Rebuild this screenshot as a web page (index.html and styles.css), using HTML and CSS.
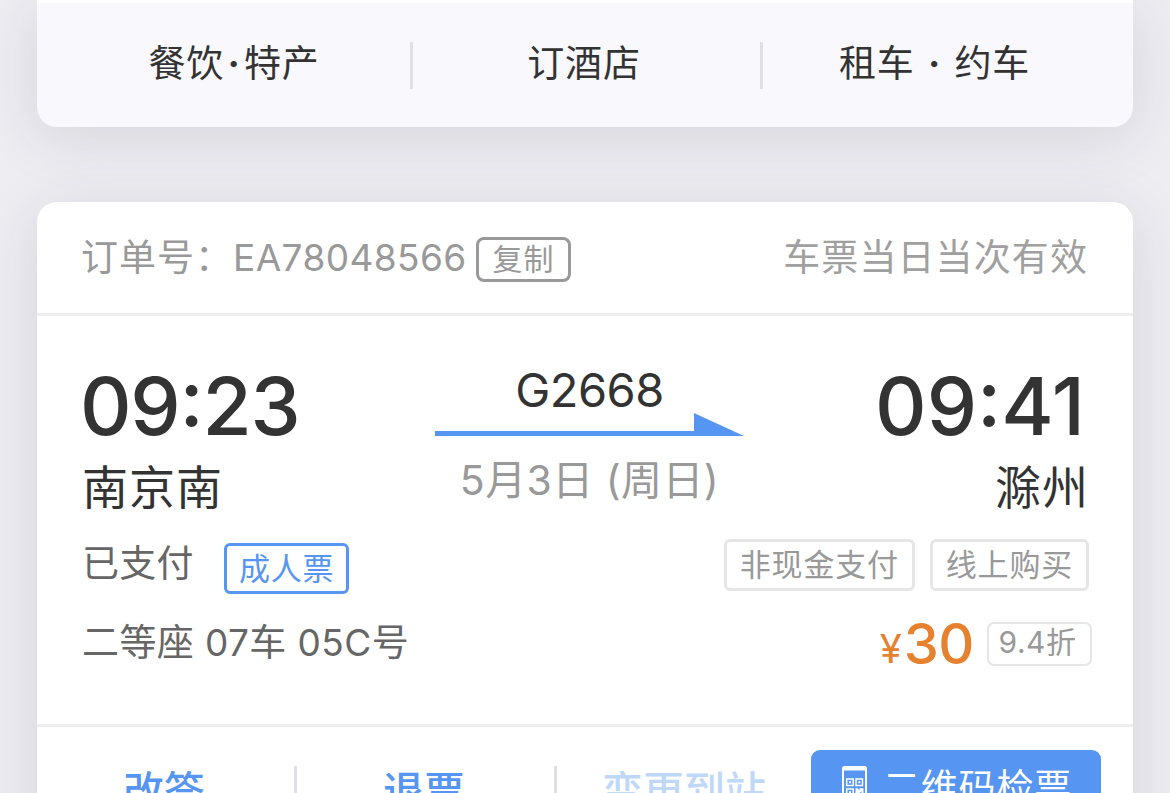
FILE: index.html
```html
<!DOCTYPE html>
<html lang="zh-CN">
<head>
  <meta charset="utf-8">
  <title>车票订单</title>
  <link rel="stylesheet" href="styles.css">
</head>
<body>
  <div class="card services">
    <div class="service">餐饮<span class="dot">·</span>特产</div>
    <div class="divider"></div>
    <div class="service">订酒店</div>
    <div class="divider"></div>
    <div class="service">租车<span class="dot wide">·</span>约车</div>
  </div>

  <div class="card ticket">
    <div class="ticket-header">
      <div class="order">
        <span>订单号：</span>
        <span class="order-no">EA78048566</span>
        <button type="button" class="copy-btn">复制</button>
      </div>
      <span class="notice">车票当日当次有效</span>
    </div>

    <div class="ticket-body">
      <div class="route">
        <div class="stop">
          <div class="time">09:23</div>
          <div class="station">南京南</div>
        </div>
        <div class="train">
          <div class="train-no">G2668</div>
          <svg class="arrow" width="309" height="23" viewBox="0 0 309 23">
            <path d="M0 18h259V0l50 23H0z" fill="#5696f2"/>
          </svg>
          <div class="date">5月3日 <span class="weekday">(周日)</span></div>
        </div>
        <div class="stop stop-end">
          <div class="time">09:41</div>
          <div class="station">滁州</div>
        </div>
      </div>

      <div class="info">
        <div class="status">已支付<span class="tag tag-blue">成人票</span></div>
        <div class="tags">
          <span class="tag">非现金支付</span>
          <span class="tag">线上购买</span>
        </div>
      </div>

      <div class="info seat-row">
        <div class="seat">二等座 07车 05C号</div>
        <div class="price">
          <span class="yen">¥</span><span class="amount">30</span>
          <span class="discount">9.4折</span>
        </div>
      </div>
    </div>

    <div class="ticket-footer">
      <div class="action">改签</div>
      <div class="divider"></div>
      <div class="action">退票</div>
      <div class="divider"></div>
      <div class="action disabled">变更到站</div>
      <button type="button" class="qr-btn">
        <svg class="qr-icon" width="25" height="46" viewBox="0 0 25 46">
          <rect width="25" height="46" rx="2.5" fill="#fff"/>
          <rect x="2" y="4.5" width="21" height="35" fill="#5696f2"/>
          <g fill="none" stroke="#fff" stroke-width="1.5">
            <rect x="4.7" y="13" width="6.5" height="6.5"/>
            <rect x="14" y="13" width="6.5" height="6.5"/>
            <rect x="4.7" y="23" width="6.5" height="6.5"/>
          </g>
          <path d="M7 15.3h2v2H7zM16.3 15.3h2v2h-2zM7 25.3h2v2H7zM13.5 22.2h2l2 2v-2h4v8h-2v-5l-3 3h-3z" fill="#fff"/>
        </svg>
        <span>二维码检票</span>
      </button>
    </div>
  </div>
</body>
</html>
```

FILE: styles.css
```css
* {
  box-sizing: border-box;
}

body {
  margin: 0;
  height: 793px;
  overflow: hidden;
  background: #eeedf2;
  font-family: Inter, "Noto Sans CJK SC", sans-serif;
  font-weight: 400;
  color: #333;
}

button {
  font-family: inherit;
  margin: 0;
}

.card {
  margin: 0 37px;
  background: #fff;
  box-shadow: 0 10px 60px rgba(50, 50, 60, 0.13);
}

.services {
  display: flex;
  align-items: center;
  height: 127px;
  border-top: 3px solid #fff;
  border-radius: 0 0 20px 20px;
  background: #f8f8fd;
  font-size: 37px;
  line-height: 50px;
  letter-spacing: 0.8px;
}

.service {
  flex: 1;
  display: flex;
  justify-content: center;
  padding: 0 5px 3px 0;
}

.service:first-child {
  flex: 0 0 373px;
  padding-left: 26px;
}

.service:last-child {
  flex: 0 0 370px;
  padding-right: 27px;
}

.dot {
  width: 20px;
  font-weight: 700;
  text-align: center;
}

.dot.wide {
  width: 40px;
}

.divider {
  flex: none;
  width: 3px;
  height: 47px;
  background: #e0e0e4;
}

.ticket {
  margin-top: 75px;
  height: 700px;
  border-radius: 20px;
}

.ticket-header {
  display: flex;
  justify-content: space-between;
  height: 114px;
  padding: 31px 45px 0 44px;
  border-bottom: 3px solid #eee;
  color: #999;
  font-size: 37px;
  line-height: 50px;
}

.order {
  display: flex;
  align-items: flex-start;
  letter-spacing: 1px;
}

.order-no {
  width: 243px;
  letter-spacing: 0.4px;
}

.copy-btn {
  width: 95px;
  height: 45px;
  margin-top: 4px;
  padding: 0;
  border: 3px solid #999;
  border-radius: 8px;
  background: #fff;
  color: #999;
  font-size: 30px;
  line-height: 39px;
  letter-spacing: 1px;
}

.notice {
  letter-spacing: 1.1px;
  color: #a0a0a0;
}

.ticket-body {
  height: 411px;
  padding: 45px 44px 0 45px;
  border-bottom: 3px solid #eee;
}

.route {
  display: flex;
  justify-content: space-between;
  height: 163px;
}

.stop {
  width: 300px;
}

.stop-end {
  width: 292px;
  text-align: right;
}

.time {
  height: 90px;
  margin-left: -2px;
  font-size: 80px;
  line-height: 90px;
  font-weight: 500;
  font-feature-settings: "case";
  letter-spacing: -1.3px;
}

.stop-end .time {
  margin-right: 4px;
  letter-spacing: 0;
}

.station {
  margin-top: 6px;
  font-size: 46px;
  line-height: 60px;
  letter-spacing: 1px;
}

.train {
  display: flex;
  flex-direction: column;
  align-items: center;
  width: 309px;
}

.train-no {
  height: 52px;
  font-size: 47px;
  line-height: 58px;
  letter-spacing: -0.5px;
}

.arrow {
  display: block;
}

.date {
  margin-top: 14px;
  font-size: 41px;
  line-height: 60px;
  letter-spacing: 0.4px;
  color: #999;
  white-space: nowrap;
}

.info {
  display: flex;
  justify-content: space-between;
  height: 80px;
  color: #666;
  font-size: 37px;
}

.status {
  display: flex;
  padding-top: 15px;
  line-height: 50px;
  letter-spacing: 0.3px;
}

.tags {
  display: flex;
  gap: 15px;
  padding-top: 15px;
}

.tag {
  height: 52px;
  padding: 0 13px;
  border: 3px solid #e6e6e6;
  border-radius: 6px;
  color: #999;
  font-size: 31px;
  line-height: 45px;
  letter-spacing: 0.8px;
  white-space: nowrap;
}

.tag-blue {
  height: 51px;
  margin: 4px 0 0 30px;
  padding: 0 12px;
  border-color: #5696f2;
  color: #5696f2;
}

.seat-row {
  height: 75px;
}

.seat {
  padding-top: 14px;
  line-height: 50px;
  letter-spacing: 0.4px;
}

.price {
  display: flex;
  align-items: flex-start;
  margin-right: -3px;
  color: #e5812f;
}

.yen {
  padding-top: 20px;
  font-size: 40px;
  line-height: 50px;
  letter-spacing: 2px;
}

.amount {
  font-size: 56px;
  line-height: 80px;
  font-weight: 500;
  letter-spacing: -0.5px;
}

.discount {
  width: 105px;
  height: 44px;
  margin: 18px 0 0 13px;
  padding-right: 4px;
  border: 2px solid #e6e6e6;
  border-radius: 7px;
  color: #999;
  font-size: 30px;
  line-height: 36px;
  letter-spacing: 0.5px;
  text-align: center;
}

.ticket-footer {
  display: flex;
  padding: 23px 32px 0 0;
}

.ticket-footer .divider {
  height: 50px;
  margin-top: 16px;
}

.action {
  flex: 0 0 257px;
  margin-top: 11px;
  padding-right: 3px;
  color: #5696f2;
  font-size: 41px;
  font-weight: 500;
  line-height: 60px;
  text-align: center;
}

.action.disabled {
  flex-basis: 254px;
  padding-right: 0;
  color: #c0d8f8;
}

.qr-btn {
  display: flex;
  align-items: flex-start;
  flex: 0 0 290px;
  height: 84px;
  padding: 16px 0 0 31px;
  margin-left: auto;
  border: none;
  border-radius: 9px;
  background: #5696f2;
  color: #fff;
  font-size: 37px;
  line-height: 44px;
  letter-spacing: 0.8px;
}

.qr-btn span {
  margin-left: 16px;
}
```
